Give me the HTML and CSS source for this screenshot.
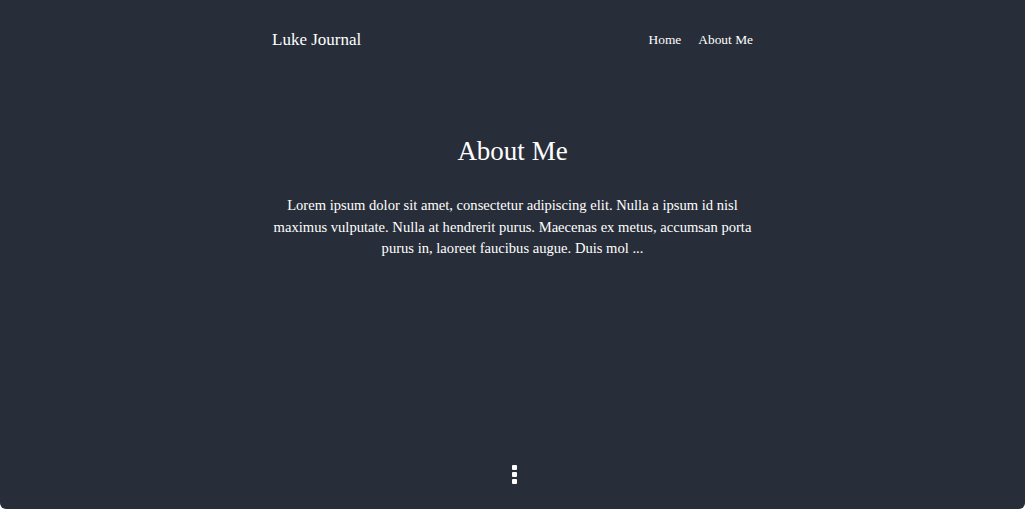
FILE: index.html
```html
<!DOCTYPE html>
<html lang="en">
<head>
<meta charset="utf-8">
<title>Luke Journal</title>
<link rel="stylesheet" href="styles.css">
</head>
<body>
<div class="page">
  <header class="header">
    <a class="brand" href="#">Luke Journal</a>
    <nav class="nav">
      <a href="#">Home</a>
      <a href="#">About Me</a>
    </nav>
  </header>
  <main class="main">
    <h1 class="title">About Me</h1>
    <p class="text">Lorem ipsum dolor sit amet, consectetur adipiscing elit. Nulla a ipsum id nisl maximus vulputate. Nulla at hendrerit purus. Maecenas ex metus, accumsan porta purus in, laoreet faucibus augue. Duis mol ...</p>
  </main>
  <footer class="footer">
    <span class="dots"><i></i><i></i><i></i></span>
  </footer>
</div>
</body>
</html>
```

FILE: styles.css
```css
html, body {
  margin: 0;
  height: 100%;
  background: #ffffff;
}
body {
  font-family: "Liberation Serif", "Times New Roman", serif;
  color: #ffffff;
}
.page {
  height: 509px;
  background: #282e39;
  border-radius: 0 0 6px 6px;
  display: flex;
  flex-direction: column;
  align-items: center;
}
.header {
  width: 481px;
  display: flex;
  justify-content: space-between;
  align-items: center;
  padding-top: 29px;
  height: 22px;
}
.brand {
  color: #fff;
  text-decoration: none;
  font-size: 17px;
}
.nav {
  display: flex;
  gap: 17px;
}
.nav a {
  color: #fff;
  text-decoration: none;
  font-size: 13.4px;
}
.main {
  width: 481px;
  flex: 1;
  text-align: center;
}
.title {
  font-weight: normal;
  font-size: 27px;
  margin: 84px 0 0;
  line-height: 32px;
}
.text {
  margin: 28px -2px 0;
  font-size: 14.6px;
  line-height: 21.5px;
}
.footer {
  height: 50px;
  display: flex;
  justify-content: center;
}
.dots {
  display: flex;
  flex-direction: column;
  gap: 2px;
  margin-top: 6px;
  margin-left: 3px;
}
.dots i {
  display: block;
  width: 5px;
  height: 5px;
  border-radius: 1px;
  background: #fff;
}
```
